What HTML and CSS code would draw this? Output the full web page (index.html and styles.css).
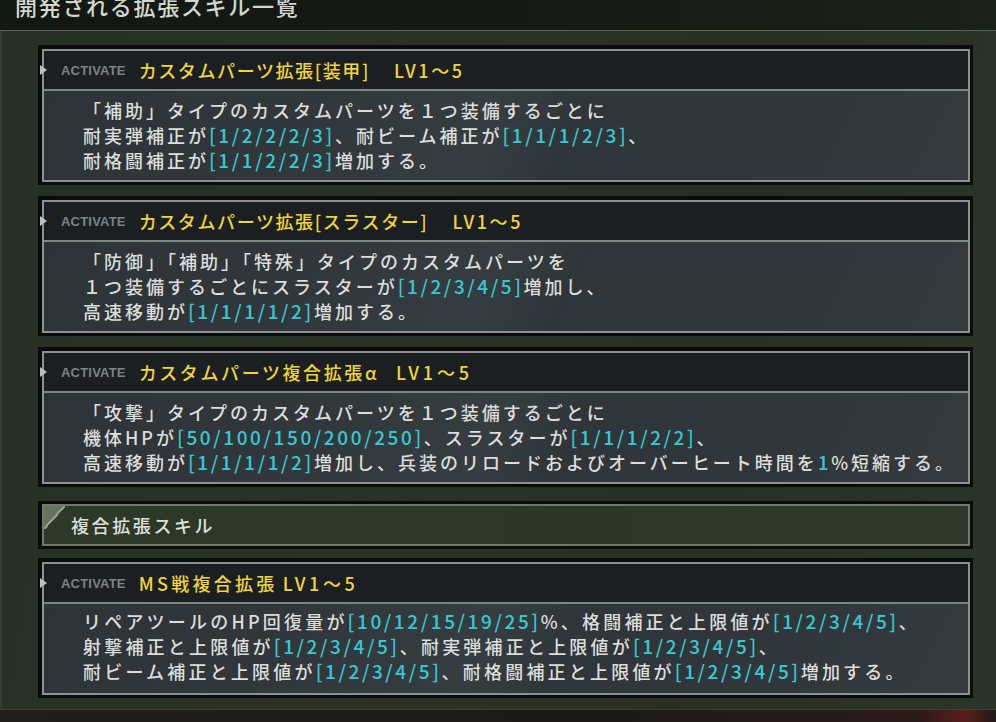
FILE: index.html
```html
<!DOCTYPE html>
<html lang="ja">
<head>
<meta charset="utf-8">
<title>開発される拡張スキル一覧</title>
<link rel="stylesheet" href="styles.css">
</head>
<body>
<div class="screen">
  <header class="titlebar"><h1>開発される拡張スキル一覧</h1></header>
  <main class="panel">
    <section class="card">
      <div class="frame">
        <div class="head"><span class="tag">ACTIVATE</span><span class="name">カスタムパーツ拡張[装甲]<span class="lv">LV1～5</span></span></div>
        <div class="body">
          <p>「補助」タイプのカスタムパーツを１つ装備するごとに</p>
          <p>耐実弾補正が<span class="v">[1/2/2/2/3]</span>、耐ビーム補正が<span class="v">[1/1/1/2/3]</span>、</p>
          <p>耐格闘補正が<span class="v">[1/1/2/2/3]</span>増加する。</p>
        </div>
      </div>
    </section>
    <section class="card">
      <div class="frame">
        <div class="head"><span class="tag">ACTIVATE</span><span class="name">カスタムパーツ拡張[スラスター]<span class="lv">LV1～5</span></span></div>
        <div class="body">
          <p>「防御」「補助」「特殊」タイプのカスタムパーツを</p>
          <p>１つ装備するごとにスラスターが<span class="v">[1/2/3/4/5]</span>増加し、</p>
          <p>高速移動が<span class="v">[1/1/1/1/2]</span>増加する。</p>
        </div>
      </div>
    </section>
    <section class="card">
      <div class="frame">
        <div class="head"><span class="tag">ACTIVATE</span><span class="name name-wide">カスタムパーツ複合拡張α<span class="lv lv-alpha">LV1～5</span></span></div>
        <div class="body">
          <p>「攻撃」タイプのカスタムパーツを１つ装備するごとに</p>
          <p>機体HPが<span class="v">[50/100/150/200/250]</span>、スラスターが<span class="v">[1/1/1/2/2]</span>、</p>
          <p>高速移動が<span class="v">[1/1/1/1/2]</span>増加し、兵装のリロードおよびオーバーヒート時間を<span class="v">1</span>%短縮する。</p>
        </div>
      </div>
    </section>
    <div class="section">
      <div class="section-frame"><span class="section-title">複合拡張スキル</span></div>
    </div>
    <section class="card">
      <div class="frame">
        <div class="head"><span class="tag">ACTIVATE</span><span class="name name-wider">MS戦複合拡張<span class="lv lv-ms">LV1～5</span></span></div>
        <div class="body body-last">
          <p>リペアツールのHP回復量が<span class="v">[10/12/15/19/25]</span>%、格闘補正と上限値が<span class="v">[1/2/3/4/5]</span>、</p>
          <p>射撃補正と上限値が<span class="v">[1/2/3/4/5]</span>、耐実弾補正と上限値が<span class="v">[1/2/3/4/5]</span>、</p>
          <p>耐ビーム補正と上限値が<span class="v">[1/2/3/4/5]</span>、耐格闘補正と上限値が<span class="v">[1/2/3/4/5]</span>増加する。</p>
        </div>
      </div>
    </section>
  </main>
  <div class="floor"></div>
</div>
</body>
</html>
```

FILE: styles.css
```css
* { box-sizing: border-box; }
html, body { margin: 0; padding: 0; }
body {
  width: 996px;
  height: 722px;
  overflow: hidden;
  background: #1c1a1a;
  font-family: "Noto Sans CJK JP", "Noto Sans", sans-serif;
}
.screen {
  display: flex;
  flex-direction: column;
  height: 722px;
}
.titlebar {
  height: 31px;
  flex: none;
  overflow: hidden;
  padding-left: 15px;
  background: linear-gradient(90deg, #121712 0%, #151b14 55%, #1a2118 100%);
  border-bottom: 1px solid #5d6656;
}
.titlebar h1 {
  margin: -9px 0 0;
  font-size: 22px;
  font-weight: 500;
  line-height: 28px;
  letter-spacing: 1.7px;
  color: #d3d7cf;
  white-space: nowrap;
}
.panel {
  height: 679px;
  flex: none;
  padding: 14px 23px 0 36px;
  background: linear-gradient(100deg, #263024 0%, #2a3227 40%, #283025 70%, #2b3428 100%);
  border-left: 2px solid #343d31;
  border-bottom: 1px solid #3c4438;
}
.card {
  border: 4px solid #0a0c0b;
  border-right-width: 3px;
  border-bottom-width: 3px;
}
.card + .card { margin-top: 11px; }
.section + .card { margin-top: 9px; }
.frame {
  border: 2px solid #8b9292;
}
.head {
  position: relative;
  height: 40px;
  display: flex;
  align-items: center;
  padding-left: 17px;
  background: #1b1f21;
  border-bottom: 2px solid #7e8585;
  white-space: nowrap;
}
.head::before {
  content: "";
  position: absolute;
  left: -4px;
  top: 14px;
  border-left: 7px solid #bcc1c1;
  border-top: 5px solid transparent;
  border-bottom: 5px solid transparent;
}
.tag {
  font-family: "Liberation Sans", Arial, sans-serif;
  font-weight: 700;
  font-size: 13px;
  letter-spacing: 0.2px;
  color: #7d8386;
  margin-right: 13px;
}
.name {
  font-size: 18px;
  font-weight: 500;
  letter-spacing: 1.6px;
  color: #f0d53d;
}
.name-wide { letter-spacing: 2.6px; }
.name-wider { letter-spacing: 3.3px; }
.lv { margin-left: 24px; letter-spacing: 2.6px; }
.lv-alpha { margin-left: 17px; letter-spacing: 3.8px; }
.lv-ms { margin-left: 5px; letter-spacing: 3.6px; }
.body {
  height: 89px;
  padding: 7px 0 0 39px;
  background: linear-gradient(115deg, #2d3336 0%, #31373a 30%, #363d40 48%, #2f3538 56%, #30363a 80%, #343a3d 100%);
}
.body-last { padding-top: 5px; }
.body p {
  margin: 0;
  font-size: 18px;
  font-weight: 500;
  line-height: 25px;
  letter-spacing: 3px;
  color: #dcdedd;
  white-space: nowrap;
}
.body-last p { letter-spacing: 3.2px; }
.v {
  font-size: 19px;
  line-height: 1;
  letter-spacing: 2.6px;
  color: #37c9d3;
}
.section {
  margin-top: 14px;
  border: 3px solid #0a0c0a;
  border-left-width: 4px;
}
.section-frame {
  position: relative;
  height: 42px;
  display: flex;
  align-items: center;
  padding-left: 27px;
  border: 2px solid #6f7a69;
  background: linear-gradient(90deg, #2d3829 0%, #2c3729 60%, #2e392b 100%);
}
.section-frame::before {
  content: "";
  position: absolute;
  left: 0;
  top: 0;
  width: 21px;
  height: 23px;
  background: linear-gradient(to bottom right, #66725f 0%, #66725f 46%, #95a08e 46%, #95a08e 53%, transparent 53%);
}
.section-title {
  font-size: 18px;
  font-weight: 500;
  letter-spacing: 2.6px;
  color: #dfe1dc;
}
.floor {
  flex: 1;
  background: linear-gradient(90deg, #221d1d 0%, #1c1818 60%, #2a1a1a 92%, #5a1c1c 97%, #221a1a 100%);
}
```
